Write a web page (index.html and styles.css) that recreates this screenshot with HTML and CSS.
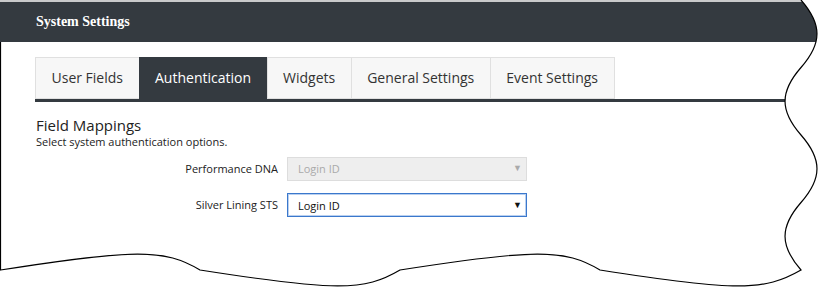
FILE: index.html
```html
<!DOCTYPE html>
<html lang="en">
<head>
    <meta charset="UTF-8">
    <title>System Settings</title>
    <link rel="stylesheet" href="styles.css">
</head>
<body>

    <div class="page">
        <div class="sheet">
            <header class="titlebar">
                <h1>System Settings</h1>
            </header>

            <main class="content">
                <nav class="tabs">
                    <a class="tab">User Fields</a>
                    <a class="tab active">Authentication</a>
                    <a class="tab">Widgets</a>
                    <a class="tab">General Settings</a>
                    <a class="tab">Event Settings</a>
                </nav>

                <section class="mappings">
                    <h2>Field Mappings</h2>
                    <p class="hint">Select system authentication options.</p>

                    <div class="form-row">
                        <label>Performance DNA</label>
                        <div class="select disabled">
                            <select disabled><option>Login ID</option></select>
                        </div>
                    </div>
                    <div class="form-row">
                        <label>Silver Lining STS</label>
                        <div class="select focused">
                            <select><option>Login ID</option></select>
                        </div>
                    </div>
                </section>
            </main>
        </div>

        <!-- torn paper edge drawn over the clipped sheet -->
        <svg class="edge" width="819" height="288" viewBox="0 0 819 288">
            <path d="M801 0
                     C822.3 24.3 822.3 43.2 801 67.5
                     C779.7 91.8 779.7 110.7 801 135
                     C822.3 159.3 822.3 178.2 801 202.5
                     C779.7 226.8 779.7 245.7 801 270
                     C764 291.3 736 291.3 600 270
                     C564 248.7 536 248.7 400 270
                     C364 291.3 336 291.3 200 270
                     C164 248.7 136 248.7 0.5 270
                     L0.5 42" />
        </svg>
    </div>

</body>
</html>
```

FILE: styles.css
```css
body { margin: 0; background: #fff; font-family: "Open Sans", "Noto Sans", sans-serif; color: #333; }

.page { position: relative; width: 819px; height: 288px; overflow: hidden; }
.sheet { width: 819px; height: 288px; background: #fff;
    clip-path: path('M0 0 L801 0 C822.3 24.3 822.3 43.2 801 67.5 C779.7 91.8 779.7 110.7 801 135 C822.3 159.3 822.3 178.2 801 202.5 C779.7 226.8 779.7 245.7 801 270 C764 291.3 736 291.3 600 270 C564 248.7 536 248.7 400 270 C364 291.3 336 291.3 200 270 C164 248.7 136 248.7 0 270 Z'); }
.edge { position: absolute; top: 0; left: 0; pointer-events: none; }
.edge path { fill: none; stroke: #000; stroke-width: 1.2; }

.titlebar { height: 40px; border-top: 2px solid #c9cacb; background: #343a40; padding-left: 36px; }
.titlebar h1 { margin: 0; font: bold 14px/40px "Liberation Serif", "Times New Roman", serif; color: #fff; }

.content { padding: 15px 0 0 35px; }

.tabs { display: flex; border-bottom: 3px solid #343a40; }
.tab { height: 40px; line-height: 40px; padding: 0 15.5px; font-size: 14px; color: #333; background: #f7f7f7; border: 1px solid #e0e0e0; margin-left: -1px; }
.tab:first-child { margin-left: 0; }
.tab.active { background: #343a40; border-color: #343a40; color: #fff; }

.mappings { padding-left: 1px; }
.mappings h2 { margin: 13px 0 0; font-size: 15px; font-weight: normal; line-height: 20px; color: #222; }
.hint { margin: -1px 0 6px; font-size: 11px; line-height: 16px; color: #222; }

.form-row { display: flex; align-items: center; margin-bottom: 12px; }
.form-row label { width: 242px; margin-right: 9px; text-align: right; font-size: 11px; color: #222; }

.select { position: relative; width: 240px; }
.select select { width: 100%; height: 24px; padding: 0 10px; font-family: inherit; font-size: 11px; appearance: none; -webkit-appearance: none; border-radius: 0; outline: none; }
.select::after { content: "▼"; position: absolute; right: 5px; top: 6px; font-size: 9px; line-height: 12px; }
.select.disabled select { background: #eee; border: 1px solid #ddd; color: #aaa; opacity: 1; }
.select.disabled::after { color: #aaa; }
.select.focused select { background: #fff; border: 1px solid #3b78cc; box-shadow: inset 0 0 0 1px #b9d0f0; color: #111; }
.select.focused::after { color: #111; }
```
